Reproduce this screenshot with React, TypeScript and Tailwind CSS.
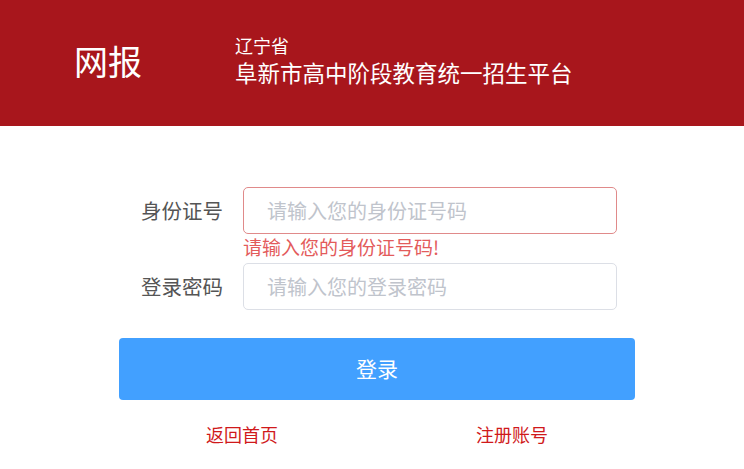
import React from 'react';

const font = { fontFamily: '"Microsoft YaHei", "Noto Sans CJK SC", "Noto Sans", sans-serif' };

export default function App() {
  return (
    <div className="min-h-screen bg-white" style={font}>
      <header className="h-[126px] bg-[#a8161c] flex items-center text-white">
        <div className="w-[235px] pl-[74px] text-[34px] leading-none -mt-[4px]">网报</div>
        <div className="flex flex-col gap-[2px] -mt-[7px]">
          <span className="text-[18px] leading-[22px]">辽宁省</span>
          <span className="text-[22.5px] leading-[28px]">阜新市高中阶段教育统一招生平台</span>
        </div>
      </header>

      <main className="pt-[61px]">
        <div className="w-[516px] ml-[119px]">
          <div className="flex items-center">
            <label className="w-[124px] pr-[20px] text-right text-[20.5px] text-[#555]">身份证号</label>
            <input
              placeholder="请输入您的身份证号码"
              className="w-[374px] h-[47px] rounded-[5px] border border-[#e08a8a] px-[23px] text-[20px] outline-none placeholder:text-[#c0c4cc]"
            />
          </div>
          <div className="ml-[124px] h-[29px] pt-[1px] text-[19px] leading-[24px] text-[#e35b5b]">请输入您的身份证号码!</div>
          <div className="flex items-center">
            <label className="w-[124px] pr-[20px] text-right text-[20.5px] text-[#555]">登录密码</label>
            <input
              type="password"
              placeholder="请输入您的登录密码"
              className="w-[374px] h-[47px] rounded-[5px] border border-[#dcdfe6] px-[23px] text-[20px] outline-none placeholder:text-[#c0c4cc]"
            />
          </div>
          <button className="mt-[28px] w-[516px] h-[62px] rounded-[4px] bg-[#42a0ff] text-white text-[21px]">登录</button>
        </div>
        <div className="w-[540px] ml-[107px] mt-[21px] grid grid-cols-2 text-center text-[18px] text-[#d0191b]">
          <a href="#">返回首页</a>
          <a href="#">注册账号</a>
        </div>
      </main>
    </div>
  );
}
